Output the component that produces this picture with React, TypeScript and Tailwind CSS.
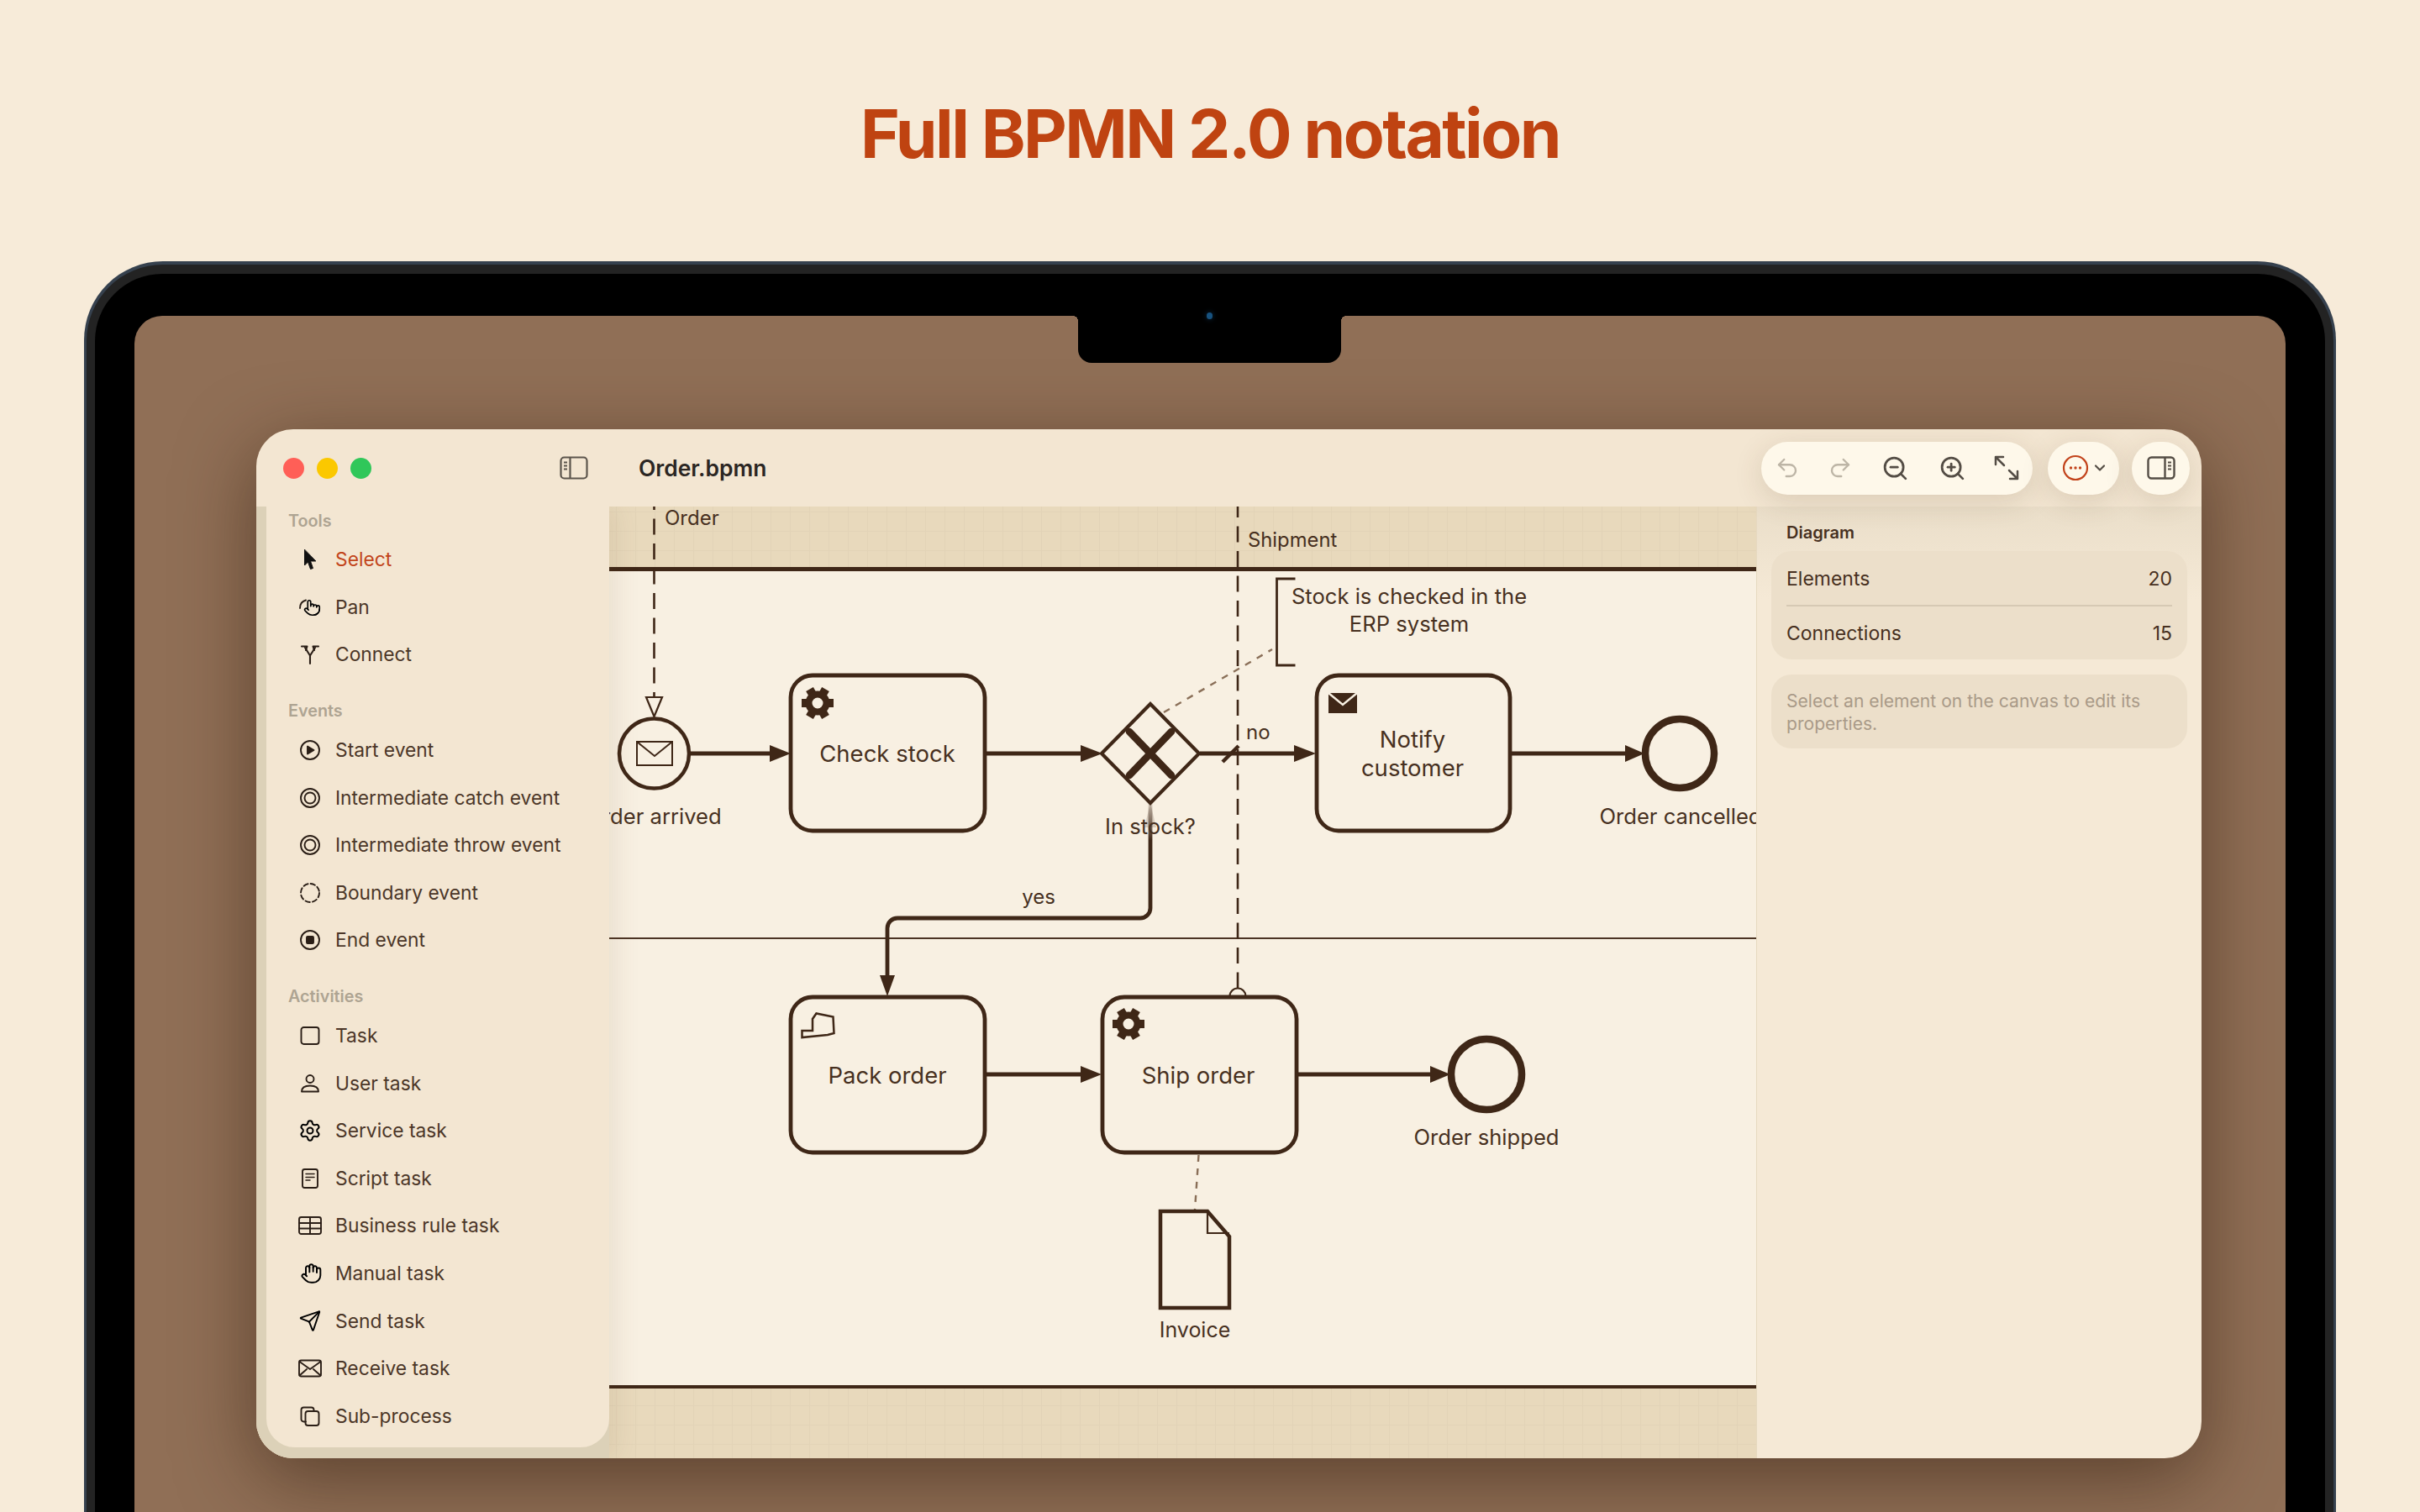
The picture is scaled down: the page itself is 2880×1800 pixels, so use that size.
import { ChevronDown, Hand, Pointer, Send, Settings, Undo2, Redo2, ZoomIn, ZoomOut } from 'lucide-react';
import type { ReactNode } from 'react';

const INK = '#3f2717';
const GRID =
  'bg-[linear-gradient(#e2d3b7_1px,transparent_1px),linear-gradient(90deg,#e2d3b7_1px,transparent_1px)] bg-[size:23px_23px]';

/** Sidebar glyphs share a 28px box so the labels line up */
function Glyph({ children }: { children: ReactNode }) {
  return (
    <svg width="28" height="28" viewBox="0 0 28 28" fill="none" stroke="#2a1e16" strokeWidth="1.9" strokeLinecap="round" strokeLinejoin="round" className="shrink-0">
      {children}
    </svg>
  );
}

const tools = [
  {
    label: 'Select',
    active: true,
    icon: <path d="M7.500 2.500V21L11.500 17 14.500 25.500 17.500 24.500 14.500 16H20.500Z" fill="#111" stroke="#111" strokeWidth="1" />,
  },
  {
    label: 'Pan',
    icon: (
      <>
        <path d="M2 15c0-5 3-8.500 7-9.500" />
        <Pointer x="6" y="4" width="21" height="21" strokeWidth="1.900" />
      </>
    ),
  },
  {
    label: 'Connect',
    icon: (
      <>
        <path d="M14 25v-9.500L20 6M14 15.500 8 6" strokeWidth="2.100" />
        <path d="M4 4.500h6.500L9 9M24 4.500h-6.500L19 9" strokeWidth="2.100" />
      </>
    ),
  },
];

const events = [
  { label: 'Start event', icon: <><circle cx="14" cy="14" r="11" /><path d="M11 9.500v9l7.500-4.500z" fill="#2a1e16" /></> },
  { label: 'Intermediate catch event', icon: <><circle cx="14" cy="14" r="11" /><circle cx="14" cy="14" r="6.500" /></> },
  { label: 'Intermediate throw event', icon: <><circle cx="14" cy="14" r="11" /><circle cx="14" cy="14" r="6.500" /></> },
  { label: 'Boundary event', icon: <circle cx="14" cy="14" r="11" strokeDasharray="5.500 3.200" /> },
  { label: 'End event', icon: <><circle cx="14" cy="14" r="11" /><rect x="10" y="10" width="8" height="8" rx="1" fill="#2a1e16" /></> },
];

const activities = [
  { label: 'Task', icon: <rect x="3.500" y="4" width="21" height="20" rx="3" /> },
  { label: 'User task', icon: <><circle cx="14" cy="8.500" r="4.500" /><path d="M4 23.500c0-4.500 4-7 10-7s10 2.500 10 7z" /></> },
  { label: 'Service task', icon: <Settings x="0" y="0" width="28" height="28" strokeWidth="1.700" /> },
  { label: 'Script task', icon: <><rect x="5" y="3" width="18" height="22" rx="2.500" /><path d="M9 8.500h10M9 12.500h10M9 16h5" strokeWidth="1.500" /></> },
  { label: 'Business rule task', icon: <><rect x="1" y="4" width="26" height="20" rx="2.500" /><path d="M1 11h26M1 17.500h26M14 4v20" /></> },
  { label: 'Manual task', icon: <Hand x="2.500" y="1" width="26" height="26" strokeWidth="1.800" /> },
  { label: 'Send task', icon: <Send x="0.500" y="0" width="27" height="27" strokeWidth="1.700" /> },
  { label: 'Receive task', icon: <><rect x="1" y="4.500" width="26" height="19" rx="2.500" /><path d="m1.500 6 12.500 9 12.500-9M1.500 22.500l8.500-7.500M26.500 22.500 18 15" /></> },
  { label: 'Sub-process', icon: <><path d="M9 20.500H6.500A3 3 0 0 1 3.500 17.500V6.500a3 3 0 0 1 3-3h9a3 3 0 0 1 3 3V8" /><rect x="8.500" y="8" width="16" height="17" rx="3" /></> },
];

type Item = { label: string; icon: ReactNode; active?: boolean };

function Section({ title, items, first }: { title: string; items: Item[]; first?: boolean }) {
  return (
    <div className={first ? '' : 'mt-[23px]'}>
      <div className="h-[34px] pl-[26px] pt-[1px] flex items-center text-[19.800px] font-semibold text-[#aea492]">{title}</div>
      {items.map((item) => (
        <div key={item.label} className="h-[56.6px] pl-[38px] pt-[2px] flex items-center gap-[16px]">
          <Glyph>{item.icon}</Glyph>
          <span className={`text-[22.800px] ${item.active ? 'text-[#c2451b]' : 'text-[#4b3628]'}`}>{item.label}</span>
        </div>
      ))}
    </div>
  );
}

function Sidebar() {
  return (
    <div className="absolute left-0 top-0 bottom-0 w-[420px] bg-[#dcd1b8] pl-[12px] pb-[13px] shadow-[8px_0_28px_rgba(110,80,40,0.1)]">
      <div className="h-full bg-[#f3e6d2] rounded-b-[34px]">
        <Section title="Tools" items={tools} first />
        <Section title="Events" items={events} />
        <Section title="Activities" items={activities} />
      </div>
    </div>
  );
}

function Gear({ x, y }: { x: number; y: number }) {
  return (
    <g transform={`translate(${x} ${y})`} fill={INK}>
      {[30, 90, 150, 210, 270, 330].map((a) => (
        <rect key={a} x="-5" y="-19" width="10" height="9" transform={`rotate(${a})`} />
      ))}
      <circle r="10.500" fill="none" stroke={INK} strokeWidth="8" />
    </g>
  );
}

function Task({ x, y, w, h }: { x: number; y: number; w: number; h: number }) {
  return <rect x={x} y={y} width={w} height={h} rx="26" fill="none" stroke={INK} strokeWidth="4.800" />;
}

function Flow({ d, head }: { d: string; head: string }) {
  return (
    <>
      <path d={d} fill="none" stroke={INK} strokeWidth="5" />
      <polygon points={head} fill={INK} />
    </>
  );
}

function Label({ x, y, children, size = 'text-[25.600px]' }: { x: number; y: number; children: string; size?: string }) {
  return (
    <text x={x} y={y} textAnchor="middle" dominantBaseline="central" className={`${size} fill-[#47301f]`}>
      {children}
    </text>
  );
}

/** The BPMN drawing, in page coordinates so the numbers read off the screenshot directly */
function Diagram() {
  const taskText = 'text-[27.500px]';
  return (
    <svg className="absolute inset-0" width="1785" height="1133" viewBox="305 603 1785 1133">
      <defs>
        <linearGradient id="fade" x1="0" y1="956" x2="0" y2="1000" gradientUnits="userSpaceOnUse">
          <stop offset="0" stopColor={INK} stopOpacity="0.15" />
          <stop offset="1" stopColor={INK} />
        </linearGradient>
      </defs>

      {/* message flows */}
      <g stroke={INK} strokeWidth="2.600" fill="none" strokeDasharray="19 10.500">
        <path d="M778.500 588V829" />
        <path d="M1473 597V1177" />
      </g>
      <polygon points="769,830 788,830 778.500,853" fill="#f8f0e2" stroke={INK} strokeWidth="2.200" />
      <path d="M1463.500 1186a9.500 9.500 0 0 1 19 0" fill="#f8f0e2" stroke={INK} strokeWidth="2.200" />

      {/* associations */}
      <g stroke="#8a6f58" strokeWidth="2.400" fill="none" strokeDasharray="8 8">
        <path d="M1385 848 1514 773" />
        <path d="M1426.500 1375 1422 1440" />
      </g>

      {/* annotation */}
      <path d="M1541.500 689H1519.500V792H1541.500" fill="none" stroke={INK} strokeWidth="2.800" />
      <Label x={1677} y={709}>Stock is checked in the</Label>
      <Label x={1677} y={742}>ERP system</Label>
      <Label x={1236} y={1067} size="text-[24px]">yes</Label>
      <text x={1483} y={871} dominantBaseline="central" className="text-[24px] fill-[#47301f]">no</text>
      <text x={791} y={616} dominantBaseline="central" className="text-[24px] fill-[#47301f]">Order</text>
      <text x={1485} y={642} dominantBaseline="central" className="text-[23.800px] fill-[#47301f]">Shipment</text>

      {/* flows */}
      <Flow d="M822 897H918" head="916,887 916,907 941,897" />
      <Flow d="M1173 897H1288" head="1286,887 1286,907 1312,897" />
      <Flow d="M1428 897H1542" head="1540,887 1540,907 1566,897" />
      <Flow d="M1798 897H1936" head="1934,887 1934,907 1957,897" />
      <Flow d="M1173 1279H1288" head="1286,1269 1286,1289 1311,1279" />
      <Flow d="M1544 1279H1704" head="1702,1269 1702,1289 1726,1279" />
      <path d="M1455 907 1474 888" stroke={INK} strokeWidth="4.500" />
      <polygon points="1369,956 1362,985 1376,985" fill={INK} opacity="0.18" />
      <path d="M1369 956V1081a12 12 0 0 1-12 12H1068a12 12 0 0 0-12 12V1163" fill="none" stroke="url(#fade)" strokeWidth="4.800" />
      <polygon points="1047,1161 1065,1161 1056,1186" fill={INK} />

      {/* lane content */}
      <circle cx="778.500" cy="897" r="41.500" fill="none" stroke={INK} strokeWidth="4.500" />
      <rect x="758" y="883" width="42" height="28" fill="none" stroke={INK} strokeWidth="2" />
      <path d="m758 883 21 17 21-17" fill="none" stroke={INK} strokeWidth="2" />
      <Label x={778} y={971}>Order arrived</Label>

      <Task x={941} y={804} w={231} h={185} />
      <Gear x={973} y={837} />
      <Label x={1056} y={897} size={taskText}>Check stock</Label>

      <polygon points="1369,838 1427,897 1369,956 1311,897" fill="none" stroke={INK} strokeWidth="4.200" />
      <path d="M1344 871 1394 923M1394 871 1344 923" stroke={INK} strokeWidth="8.500" strokeLinecap="round" />
      <Label x={1369} y={983}>In stock?</Label>

      <Task x={1567} y={804} w={230} h={185} />
      <rect x="1581" y="825" width="34" height="24" fill={INK} />
      <path d="m1581 825 17 14 17-14" fill="none" stroke="#f8f0e2" strokeWidth="2.500" />
      <Label x={1681} y={880} size={taskText}>Notify</Label>
      <Label x={1681} y={914} size={taskText}>customer</Label>

      <circle cx="1999" cy="897" r="41" fill="none" stroke={INK} strokeWidth="8.500" />
      <Label x={2000} y={971}>Order cancelled</Label>

      <Task x={941} y={1187} w={231} h={185} />
      <path d="M954.500 1227H967V1213L971.500 1206.500 991.500 1210.500 992.500 1230 985 1232 954.500 1235Z" fill="none" stroke={INK} strokeWidth="2.500" />
      <Label x={1056} y={1280} size={taskText}>Pack order</Label>

      <Task x={1312} y={1187} w={231} h={185} />
      <Gear x={1343} y={1219} />
      <Label x={1426} y={1280} size={taskText}>Ship order</Label>

      <circle cx="1769" cy="1279" r="42" fill="none" stroke={INK} strokeWidth="8.500" />
      <Label x={1769} y={1353}>Order shipped</Label>

      <path d="M1381 1442H1437L1463 1472V1557H1381Z" fill="#f8f0e2" stroke={INK} strokeWidth="4.500" />
      <path d="M1437 1442V1468H1463" fill="none" stroke={INK} strokeWidth="2.200" />
      <Label x={1422} y={1583} size="text-[25px]">Invoice</Label>
    </svg>
  );
}

function Canvas() {
  return (
    <div className="relative w-[1785px] shrink-0 overflow-hidden flex flex-col bg-[#f8f0e2]">
      <div className={`h-[72px] bg-[#e8d9bc] ${GRID} bg-[position:14px_6px]`} />
      <div className="h-[5px] bg-[#3f2717]" />
      <div className="h-[436px]" />
      <div className="h-[2px] bg-[#4c3424]" />
      <div className="h-[531px]" />
      <div className="h-[4px] bg-[#3f2717]" />
      <div className={`flex-1 bg-[#e8d9bc] ${GRID} bg-[position:14px_20px]`} />
      <Diagram />
      <Sidebar />
    </div>
  );
}

function Inspector() {
  return (
    <div className="flex-1 border-l border-[#e6d9c0] bg-[linear-gradient(#eadec9,#f5e9d6_110px)] px-[17px] pt-[15px]">
      <div className="h-[30px] mb-[8px] pl-[18px] pt-[1px] flex items-center text-[20px] font-semibold text-[#47301f]">Diagram</div>
      <div className="h-[129px] rounded-[24px] bg-[#ecdfca] px-[18px] pt-[1px] text-[23px] text-[#47301f] flex flex-col">
        <div className="flex-1 flex items-center justify-between pt-[1px]">
          <span>Elements</span>
          <span>20</span>
        </div>
        <div className="h-[2px] bg-[#d6c9b4]" />
        <div className="flex-1 flex items-center justify-between pt-[1px]">
          <span>Connections</span>
          <span>15</span>
        </div>
      </div>
      <div className="mt-[18px] h-[88px] rounded-[24px] bg-[#ecdfca] pl-[18px] pr-[18px] pt-[1px] flex items-center text-[21.100px] leading-[27px] text-[#a99a88]">
        <p>Select an element on the canvas to edit its properties.</p>
      </div>
    </div>
  );
}

function TitleBar() {
  const pill = 'h-[63px] rounded-full bg-[#fef8ea] shadow-[0_8px_34px_rgba(90,60,30,0.16)] flex items-center';
  return (
    <div className="relative z-10 h-[92px] shrink-0 bg-[#f3e6d2] flex items-center pl-[32px] pr-[14px]">
      <div className="flex gap-[15px]">
        <div className="w-[25px] h-[25px] rounded-full bg-[#ff5f57]" />
        <div className="w-[25px] h-[25px] rounded-full bg-[#fbc800]" />
        <div className="w-[25px] h-[25px] rounded-full bg-[#30c75a]" />
      </div>
      <svg className="ml-[224px]" width="34" height="28" viewBox="0 0 34 28" fill="none" stroke="#5c554c" strokeWidth="2.200">
        <rect x="1.500" y="1.500" width="31" height="25" rx="4" />
        <path d="M12.500 1.500v25" />
        <path d="M5 7.500h4M5 11.500h4M5 15.500h4" strokeWidth="2" />
      </svg>
      <span className="ml-[60px] pt-[1px] text-[26.400px] font-semibold text-[#2b2623]">Order.bpmn</span>
      <div className="ml-auto flex items-center">
        <div className={`${pill} w-[323px] pl-[16px] text-[#544d45]`}>
          <Undo2 size={30} strokeWidth={1.9} className="text-[#bdb5a6]" />
          <Redo2 size={30} strokeWidth={1.9} className="ml-[33px] text-[#bdb5a6]" />
          <ZoomOut size={33} strokeWidth={2} className="ml-[34px]" />
          <ZoomIn size={33} strokeWidth={2} className="ml-[35px]" />
          <svg className="ml-[32px]" width="32" height="32" viewBox="0 0 32 32" fill="none" stroke="#544d45" strokeWidth="2.500" strokeLinecap="round" strokeLinejoin="round">
            <path d="M3 12V3h9M3 3l10 10M29 20v9h-9M29 29 19 19" />
          </svg>
        </div>
        <div className={`${pill} w-[85px] ml-[18px] pl-[17px]`}>
          <svg width="32" height="32" viewBox="0 0 32 32" fill="none" stroke="#c2431b" strokeWidth="2.200">
            <circle cx="16" cy="16" r="14" />
            <g fill="#c2431b" stroke="none">
              <circle cx="10.500" cy="16" r="1.700" />
              <circle cx="16" cy="16" r="1.700" />
              <circle cx="21.500" cy="16" r="1.700" />
            </g>
          </svg>
          <ChevronDown size={20} strokeWidth={2.600} className="ml-[3px] text-[#544d45]" />
        </div>
        <div className={`${pill} w-[69px] ml-[15px] justify-center`}>
          <svg width="34" height="28" viewBox="0 0 34 28" fill="none" stroke="#544d45" strokeWidth="2.400">
            <rect x="1.500" y="1.500" width="31" height="25" rx="4" />
            <path d="M21.500 1.500v25" />
            <path d="M25 7.500h4M25 11.500h4M25 15.500h4" strokeWidth="2" />
          </svg>
        </div>
      </div>
    </div>
  );
}

export default function App() {
  return (
    <div className="w-[2880px] h-[1800px] overflow-hidden bg-[#f7ebd9] [font-family:Inter,sans-serif]">
      <div className="h-[311px] pt-[111px] text-center text-[80px] leading-[96px] font-bold tracking-[-0.032em] text-[#bf4311]">
        Full BPMN 2.0 notation
      </div>

      <div className="ml-[100px] w-[2680px] h-[1489px] rounded-t-[94px] bg-[#36414e] pt-[4px] px-[3px]">
        <div className="h-full rounded-t-[91px] bg-[#232323] pt-[11px] px-[10px]">
          <div className="relative h-full rounded-t-[80px] bg-black pt-[50px] px-[47px]">
            <div className="relative h-full rounded-t-[33px] bg-[#906f56] pl-[145px] pt-[135px]">
              <div className="absolute left-[1117px] top-0 w-[6px] h-[6px] bg-[radial-gradient(circle_at_0_100%,transparent_6px,black_6px)]" />
              <div className="absolute left-[1123px] top-0 w-[313px] h-[56px] bg-black rounded-b-[16px]" />
              <div className="absolute left-[1436px] top-0 w-[6px] h-[6px] bg-[radial-gradient(circle_at_100%_100%,transparent_6px,black_6px)]" />
              <div className="absolute left-[1276px] top-[-4px] w-[7px] h-[8px] rounded-full bg-[#17527f] shadow-[0_0_6px_#0d2c46]" />
              <div className="w-[2315px] h-[1225px] rounded-[44px] overflow-hidden flex flex-col shadow-[0_24px_90px_rgba(40,20,5,0.5)]">
                <TitleBar />
                <div className="flex-1 flex min-h-0">
                  <Canvas />
                  <Inspector />
                </div>
              </div>
            </div>
          </div>
        </div>
      </div>
    </div>
  );
}
